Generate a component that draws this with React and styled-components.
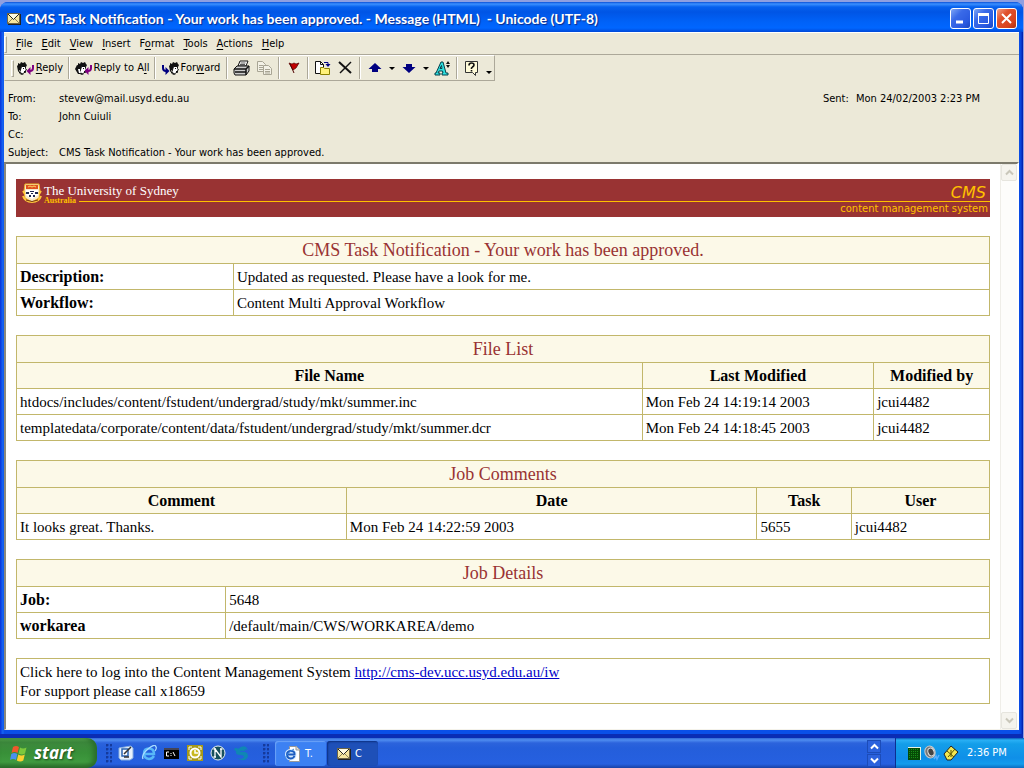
import React from "react";
import styled, { createGlobalStyle, css } from "styled-components";

const UI = '"DejaVu Sans Condensed", "Noto Sans", sans-serif';
const SERIF = '"Liberation Serif", serif';

const GlobalStyle = createGlobalStyle`
  *, *::before, *::after { box-sizing: border-box; }
  body { margin: 0; background: #8f9fe0; font: 11px/18px ${UI}; color: #000; }
  button { font: inherit; color: inherit; padding: 0; border: 0; background: none; }
`;

const Desktop = styled.div`
  min-height: 100vh;
  display: flex;
  flex-direction: column;
`;

const Window = styled.section`
  flex: 1;
  display: flex;
  flex-direction: column;
  margin: 2px 1px 0 0;
  padding: 0 4px 4px;
  border-bottom: 4px solid #0a2cb4;
  border-radius: 8px 8px 0 0;
  background: linear-gradient(90deg, #0831d9 0, #1668f5 3px, #0a4fe8 4px, #0a4fe8 calc(100% - 4px), #0a42d8 calc(100% - 2px), #0019a5 100%);
`;

const TitleBar = styled.header`
  height: 30px;
  display: flex;
  align-items: center;
  gap: 4px;
  margin: 0 -4px;
  padding: 3px 6px 0 7px;
  border-radius: 8px 8px 0 0;
  background: linear-gradient(#0a50d8 0, #3b90ff 2px, #0660ee 5px, #0055e5 10px, #0062f8 20px, #0066ff 26px, #0048d8 30px);
`;

const Title = styled.h1`
  flex: 1;
  margin: 0;
  font: bold 14px/20px Lato, sans-serif;
  white-space: pre;
  color: #fff;
  text-shadow: 1px 1px 1px #0a2a8a;
`;

const CaptionButtons = styled.div`
  display: flex;
  gap: 2px;
`;

const CaptionButton = styled.button`
  width: 21px;
  height: 21px;
  display: grid;
  place-items: center;
  border: 1px solid #fff;
  border-radius: 3px;
  background: ${(p) =>
    p.$close
      ? "linear-gradient(135deg, #f0a088 0, #e0512c 35%, #d8431c 75%, #a83214 100%)"
      : "linear-gradient(135deg, #7fa6f5 0, #3a6ae8 35%, #2a5ae0 75%, #1a46c0 100%)"};
`;

const Client = styled.div`
  flex: 1;
  display: flex;
  flex-direction: column;
  background: #ece9d8;
`;

const MenuBar = styled.nav`
  height: 23px;
  display: flex;
  align-items: center;
  gap: 9px;
  padding-top: 1px;
  border-top: 1px solid #fff;
  border-bottom: 1px solid #aca899;
`;

const Grip = styled.span`
  width: 3px;
  height: 17px;
  border: 1px solid;
  border-color: #fff #aca899 #aca899 #fff;
`;

const MenuItem = styled.button`
  line-height: 16px;
`;

const Key = styled.span`
  text-decoration: underline;
  text-underline-offset: 2px;
`;

const ToolBar = styled.div`
  align-self: flex-start;
  height: 26px;
  display: flex;
  align-items: center;
  padding-left: 6px;
  border: 1px solid;
  border-color: #fff #aca899 #aca899 #ece9d8;
`;

const ToolButton = styled.button`
  height: 22px;
  width: ${(p) => (p.$width ? p.$width + "px" : "auto")};
  display: flex;
  align-items: center;
  justify-content: center;
  gap: 1px;
  line-height: 16px;
`;

const Divider = styled.span`
  width: 2px;
  height: 22px;
  margin: 0 2px;
  border-left: 1px solid #aca899;
  border-right: 1px solid #fff;
`;

const Headers = styled.div`
  display: flex;
  justify-content: space-between;
  padding: 9px 39px 0 4px;
`;

const Fields = styled.dl`
  display: grid;
  grid-template-columns: ${(p) => p.$label}px auto;
  align-content: start;
  margin: 0;
  white-space: pre;
  dd { margin: 0; min-height: 18px; }
`;

const Viewer = styled.div`
  flex: 1;
  display: flex;
  border: 1px solid;
  border-width: 2px 2px 1px 2px;
  border-color: #7c7a6c #fff #f4f2ea #8a887c;
  background: #fff;
`;

const Message = styled.main`
  flex: 1;
  display: flex;
  flex-direction: column;
  gap: 19px;
  padding: 15px 10px 24px 10px;
  font: 15px/19px ${SERIF};
`;

const ScrollBar = styled.div`
  width: 17px;
  display: flex;
  flex-direction: column;
  justify-content: space-between;
  border-left: 1px solid #efeee8;
  background: #fdfdfb;
`;

const ScrollButton = styled.button`
  height: 17px;
  display: grid;
  place-items: center;
  border: 1px solid #e6e5de;
  border-radius: 2px;
  background: #f5f4ee;
`;

const Banner = styled.div`
  height: 38px;
  display: flex;
  gap: 2px;
  padding: 4px 0 0 6px;
  background: #993333;
  color: #fff;
`;

const BannerText = styled.div`
  flex: 1;
  display: flex;
  flex-direction: column;
`;

const BannerTop = styled.div`
  display: flex;
  justify-content: space-between;
  height: 14px;
  padding-right: 4px;
`;

const University = styled.span`
  font: 13px/16px ${SERIF};
`;

const Cms = styled.span`
  font: italic 16px/20px "DejaVu Sans", sans-serif;
  color: #ffc000;
`;

const BannerRule = styled.div`
  display: flex;
  gap: 3px;
  height: 8px;
  font: bold 8px/8px ${SERIF};
  color: #ffc000;
`;

const Rule = styled.span`
  flex: 1;
  height: 5px;
  border-bottom: 1px solid #ffc000;
`;

const BannerSub = styled.span`
  align-self: flex-end;
  padding-right: 2px;
  font: 10px/8px "DejaVu Sans", sans-serif;
  color: #ffc000;
`;

const line = css`1px solid #c2b76b`;

const Table = styled.table`
  width: 100%;
  border-collapse: collapse;
  table-layout: fixed;
  th, td { height: 26px; padding: 0 3px; border: ${line}; }
  th { font-size: 16px; }
  td { padding-top: 2px; }
  td, tbody th { text-align: left; }
`;

const TableTitle = styled.th`
  && { height: 27px; font-weight: normal; font-size: 18px; text-align: center; color: #993333; background: #fcf9e8; }
`;

const Column = styled.th`
  background: #fcf9e8;
`;

const Note = styled.p`
  margin: 0;
  padding: 4px 3px 2px;
  border: ${line};
  a { color: #0000c8; }
`;

const TaskBar = styled.footer`
  height: 30px;
  display: flex;
  background: linear-gradient(#3168d5 0, #4e8cf0 2px, #2c63dc 5px, #245edb 10px, #2660e0 26px, #1941a5 30px);
  color: #fff;
`;

const Start = styled.button`
  width: 97px;
  display: flex;
  align-items: center;
  gap: 6px;
  padding: 0 0 0 10px;
  border-radius: 0 10px 10px 0;
  background: linear-gradient(#5eac56 0, #3c873c 4px, #389038 15px, #3f9a3f 24px, #2a6a2a 30px);
  box-shadow: inset -4px 0 5px #2a6e2a;
  font: italic bold 17px/24px "Open Sans", sans-serif;
  color: #fff;
  text-shadow: 1px 1px 2px #1c4a1c;
`;

const Dots = styled.span`
  width: 6px;
  height: 20px;
  margin: 6px ${(p) => p.$after || 0}px 0 ${(p) => p.$before}px;
  background: radial-gradient(circle at 1px 1px, #153a9c 1px, transparent 2px) 0 0 / 4px 4px;
`;

const QuickLaunch = styled.div`
  display: flex;
  align-items: center;
  gap: 7px;
  padding-left: 6px;
`;

const Task = styled.button`
  width: 51px;
  height: 25px;
  display: flex;
  align-items: center;
  gap: 4px;
  margin: 3px 1px 0 0;
  padding-left: 10px;
  border-radius: 3px;
  background: ${(p) => (p.$active ? "#1e50b8" : "#3c81f3")};
  box-shadow: ${(p) => (p.$active ? "inset 1px 1px 2px #0c2f80" : "inset 1px 1px 1px #6ba2f8")};
  color: #fff;
`;

const Spinner = styled.div`
  display: flex;
  flex-direction: column;
  gap: 1px;
  margin: 2px 14px 0 auto;
`;

const SpinButton = styled.button`
  width: 14px;
  height: 13px;
  display: grid;
  place-items: center;
  border: 1px solid #1c4cb8;
  background: #2c62dd;
`;

const Tray = styled.div`
  width: 129px;
  display: flex;
  align-items: center;
  gap: 3px;
  padding-left: 12px;
  border-left: 1px solid #0c2f90;
  background: linear-gradient(#0c59b9 0, #29b0f5 2px, #139ee9 6px, #0f8fe8 20px, #149cec 26px, #0c6cc0 30px);
  time { margin-left: 5px; }
`;

const Svg = ({ w = 16, h = 16, children }) => (
  <svg width={w} height={h} viewBox={`0 0 ${w} ${h}`} aria-hidden="true">
    {children}
  </svg>
);

const Envelope = () => (
  <Svg w={14} h={12}>
    <rect x="1" y="1" width="13" height="11" fill="#222" />
    <rect x="0.5" y="0.5" width="12" height="10" fill="#f6e7a0" stroke="#6b6448" />
    <path d="M1 1l5.500 5.500L12 1" fill="#fffbe0" stroke="#222" />
    <path d="M1 10l4-4M12 10L8 6" stroke="#8c835a" />
  </Svg>
);

const Head = ({ x = 0 }) => (
  <g transform={`translate(${x} 0)`}>
    <path d="M0 5l1-1V2l2 1 1-2 2 1 2-1 1 2 1 1-1 2H5l-1 4-2-1-1 1z" fill="#111" />
    <path d="M4.500 5.500h4v2l1 1.500-1 .5v2H7l-2 2-2-3z" fill="#fff" stroke="#111" />
    <path d="M6 7.500h1M7 10.500h1" stroke="#111" />
    <path d="M1.500 7v3l2 3h3" fill="none" stroke="#111" />
  </g>
);

const ReplyIcon = () => (
  <Svg w={18} h={15}>
    <Head />
    <path d="M16 4v3q0 3-3 3" fill="none" stroke="#800080" strokeWidth="2" />
    <path d="M9.500 10l4-4v8z" fill="#800080" />
  </Svg>
);

const ReplyAllIcon = () => (
  <Svg w={18} h={15}>
    <Head x={2} />
    <path d="M0 8l2-4 2 1 1 3-1 2 2 3H3z" fill="#111" />
    <path d="M3 8h2v2l1 2H4z" fill="#fff" />
    <path d="M16 4v3q0 3-3 3" fill="none" stroke="#800080" strokeWidth="2" />
    <path d="M9.500 10l4-4v8z" fill="#800080" />
  </Svg>
);

const ForwardIcon = () => (
  <Svg w={18} h={15}>
    <Head x={7} />
    <path d="M1 4v3q0 3 3 3" fill="none" stroke="#000080" strokeWidth="2" />
    <path d="M7.500 10l-4-4v8z" fill="#000080" />
  </Svg>
);

const PrintIcon = () => (
  <Svg w={17}>
    <path d="M5 6l2-5h8l-2 5z" fill="#fff" stroke="#111" />
    <path d="M7.500 3h5M7 4.500h5" stroke="#111" strokeWidth=".7" />
    <path d="M1 9l3-3h12v5l-3 4H2l-1-2z" fill="#ccc" stroke="#111" />
    <path d="M1 9h12l3-3M13 9v6M2 12h11" fill="none" stroke="#111" strokeWidth="1.500" />
  </Svg>
);

const CopyIcon = () => (
  <Svg w={17}>
    <g fill="#f3f1e6" stroke="#a8a594">
      <path d="M1.500 1.500h5l3 3v7h-8z" />
      <path d="M3 5.500h4M3 7.500h4M3 9.500h4" />
      <path d="M7.500 5.500h5l3 3v6h-8z" />
      <path d="M9 9.500h5M9 11.500h5M9 13h5" />
    </g>
  </Svg>
);

const FlagIcon = () => (
  <Svg w={12}>
    <path d="M1 3l3 1 2-1 2 1 3-1-3 5-3 2z" fill="#c00000" stroke="#500000" strokeWidth=".7" />
    <path d="M2 4l4 9" stroke="#500000" />
  </Svg>
);

const MoveIcon = () => (
  <Svg w={17}>
    <path d="M1.500 1.500h5l3 3v9h-8z" fill="#fff" stroke="#111" />
    <path d="M6.500 1.500v3h3" fill="none" stroke="#111" />
    <path d="M6.500 7.500h3l1 1h5v6h-9z" fill="#fff27a" stroke="#8a8000" />
    <path d="M10 2.500h4V5" fill="none" stroke="#000080" />
    <path d="M11.500 4h5L14 7z" fill="#000080" />
  </Svg>
);

const DeleteIcon = () => (
  <Svg w={15}>
    <path d="M1 2l12 11" stroke="#111" strokeWidth="2" />
    <path d="M13 2L2 13" stroke="#111" strokeWidth="1.500" />
  </Svg>
);

const Up = () => (
  <Svg w={14}>
    <path d="M7 3l6.500 6H10v3H4V9H.5z" fill="#000080" />
  </Svg>
);

const Down = () => (
  <Svg w={14}>
    <path d="M7 13l6.500-6H10V4H4v3H.5z" fill="#000080" />
  </Svg>
);

const Caret = ({ low }) => (
  <Svg w={6}>
    <path d={low ? "M0 11h6l-3 3z" : "M0 7h6l-3 3z"} fill="#000" />
  </Svg>
);

const FontIcon = () => (
  <Svg w={17}>
    <path d="M1 15v-2h1L7 2h2l3 11h2v2H8v-2h1l-.5-2H5l-1 2h2v2zM6 8.500h2L7.500 5.500z" fill="#2ee0e0" stroke="#04404a" />
    <path d="M12 4l2-3 2 3zM12 5h4l-2 3z" fill="#111" />
  </Svg>
);

const HelpIcon = () => (
  <Svg w={15}>
    <path d="M1.500 1.500h12v11h-2v3l-3-3h-7z" fill="#fffbd8" stroke="#333" />
    <path d="M5 5.500Q5 3 7.500 3T10 5q0 1-1.500 2L7.500 8v1M7.500 10v1.500" fill="none" stroke="#111" strokeWidth="1.600" />
  </Svg>
);

const Chevron = ({ up, color }) => (
  <Svg w={9} h={7}>
    <path d={up ? "M1 5.500L4.500 2 8 5.500" : "M1 1.500L4.500 5 8 1.500"} fill="none" stroke={color} strokeWidth="2" />
  </Svg>
);

const Crest = () => (
  <Svg w={20} h={21}>
    <path d="M3 1h14l1 7-1 7-7 4-7-4-1-7z" fill="#f7e9c8" stroke="#f0b020" />
    <path d="M4 2h12v4H4z" fill="#e05020" />
    <path d="M6 4l2-1 2 1 2-1 2 1" fill="none" stroke="#ffd860" />
    <path d="M4 7h12v5l-6 4-6-4z" fill="#fff" />
    <path d="M4 9h3v2H4zM8 8h4v1H8zM13 9h3v2h-3zM7 12h2v2H7zM11 12h2v2h-2zM9 10h2v1H9z" fill="#202850" />
    <path d="M1 13q2 6 9 6t9-6M1 8l2 3M19 8l-2 3" fill="none" stroke="#ffc83c" strokeWidth="2" />
    <path d="M4 17q6 3 12 0" fill="none" stroke="#7a3a10" />
  </Svg>
);

const WindowsLogo = () => (
  <Svg w={18} h={17}>
    <path d="M3 2q3-2 6 0L7.500 8q-3-2-6 0z" fill="#f0582c" />
    <path d="M10 2.500q3 2 6.500 0L15 8.500q-3 2-6.500 0z" fill="#7cc83c" />
    <path d="M1.300 9q3-2 6 0L6 15q-3-2-6 0z" fill="#4a90f0" />
    <path d="M8.300 9.500q3 2 6.500 0l-1.500 6q-3 2-6.500 0z" fill="#fcd030" />
  </Svg>
);

const DesktopIcon = () => (
  <Svg>
    <path d="M1 3l12-2 2 2v10l-3 2H3l-2-2z" fill="#e8f2fc" stroke="#8ab0e0" />
    <path d="M4 4h6v7H4z" fill="#fff" stroke="#2a64b0" strokeWidth="1.500" />
    <path d="M6 9l7-7M6 12h5" stroke="#333" strokeWidth="1.500" />
  </Svg>
);

const ExplorerIcon = () => (
  <Svg>
    <path d="M13 11q-2 3-5 3-5-.5-5-5.500T8 3.500q5 0 5 5.500H4" fill="none" stroke="#58b8f8" strokeWidth="2.500" />
    <path d="M2 14Q0 10 7 4t8-2q1 1-1 4" fill="none" stroke="#a8dcff" strokeWidth="1.300" />
  </Svg>
);

const ConsoleIcon = () => (
  <Svg>
    <rect y="3" width="15" height="11" fill="#000" />
    <rect y="3" width="15" height="2" fill="#445" />
    <path d="M5 7H2.500v4H5M7 8v1M7 10v1M9 7l2 4" fill="none" stroke="#fff" />
  </Svg>
);

const OutlookIcon = () => (
  <Svg>
    <rect width="16" height="16" fill="#a89a18" />
    <path d="M2 5V2h3M11 2h3v3M14 11v3h-3M5 14H2v-3" fill="none" stroke="#fff" />
    <circle cx="8" cy="8" r="4.500" fill="#c8b820" stroke="#fff" strokeWidth="2" />
    <path d="M8 5v3h3" fill="none" stroke="#fff" strokeWidth="1.500" />
  </Svg>
);

const NetscapeIcon = () => (
  <Svg>
    <circle cx="8" cy="8" r="7" fill="#17505c" stroke="#e8f0f0" />
    <path d="M5 12V4l6 8V4M3.500 4H6M10 4h2.500M3.500 12H6" fill="none" stroke="#fff" strokeWidth="1.300" />
  </Svg>
);

const SwirlIcon = () => (
  <Svg>
    <path d="M1 5q1-4 4-1 4-4 8-2l2 3-3-1q1 2-1 2Q7 5 7 7q8-1 8 4-1 5-7 4l-5-2q7 2 8-1 0-2-4-2-5 0-4-4z" fill="#0f86b4" />
  </Svg>
);

const PageIcon = () => (
  <Svg>
    <path d="M4.500.5h7l3 3v12h-10z" fill="#fff" stroke="#999" />
    <path d="M11 .5v3.500h3.500" fill="#ddd" stroke="#999" />
    <path d="M9.500 10q-1 2.500-4 2.500Q2 12 2 8.500T6 5q4 0 3.500 3.500H3" fill="none" stroke="#d8ecff" strokeWidth="4" />
    <path d="M9.500 10q-1 2.500-4 2.500Q2 12 2 8.500T6 5q4 0 3.500 3.500H3" fill="none" stroke="#1c5cc0" strokeWidth="2" />
    <path d="M1 13Q-1 9 9 3" fill="none" stroke="#3c88e0" />
  </Svg>
);

const NetIcon = () => (
  <Svg w={13} h={13}>
    <rect width="13" height="13" fill="#e8f4e0" />
    <rect width="12" height="12" y="1" fill="#064a06" />
    <path d="M1 2.500h10M1 4.500h10M1 6.500h10M1 8.500h10M1 10.500h10" stroke="#189018" strokeDasharray="1 1" />
  </Svg>
);

const SpeakerIcon = () => (
  <Svg>
    <ellipse cx="6" cy="7" rx="5" ry="6" fill="#777" stroke="#ccc" transform="rotate(-20 6 7)" />
    <ellipse cx="7" cy="7" rx="3" ry="4" fill="#444" stroke="#ddd" transform="rotate(-20 7 7)" />
    <path d="M10 14l2-3 1 3 2-4" fill="none" stroke="#58b0ff" strokeWidth="1.500" />
  </Svg>
);

const TagIcon = () => (
  <Svg>
    <path d="M1 9l7-8 7 6-7 8H4z" fill="#f4e850" stroke="#222" />
    <path d="M4 6l7 6M5 12l7-8M8 5v7" stroke="#5a5400" />
  </Svg>
);

const menus = [["", "F", "ile"], ["", "E", "dit"], ["", "V", "iew"], ["", "I", "nsert"], ["F", "o", "rmat"], ["", "T", "ools"], ["", "A", "ctions"], ["", "H", "elp"]];

const files = [
  ["htdocs/includes/content/fstudent/undergrad/study/mkt/summer.inc", "Mon Feb 24 14:19:14 2003", "jcui4482"],
  ["templatedata/corporate/content/data/fstudent/undergrad/study/mkt/summer.dcr", "Mon Feb 24 14:18:45 2003", "jcui4482"],
];

const comments = [["It looks great. Thanks.", "Mon Feb 24 14:22:59 2003", "5655", "jcui4482"]];

function PairTable({ title, share, rows }) {
  return (
    <Table>
      <colgroup>
        <col style={{ width: share }} />
        <col />
      </colgroup>
      <thead>
        <tr><TableTitle colSpan={2}>{title}</TableTitle></tr>
      </thead>
      <tbody>
        {rows.map(([label, value]) => (
          <tr key={label}><th scope="row">{label}</th><td>{value}</td></tr>
        ))}
      </tbody>
    </Table>
  );
}

function ListTable({ title, columns, shares, rows }) {
  return (
    <Table>
      <colgroup>
        {shares.map((share, i) => <col key={i} style={{ width: share }} />)}
      </colgroup>
      <thead>
        <tr><TableTitle colSpan={columns.length}>{title}</TableTitle></tr>
        <tr>{columns.map((c) => <Column key={c} scope="col">{c}</Column>)}</tr>
      </thead>
      <tbody>
        {rows.map((row) => (
          <tr key={row[0]}>{row.map((cell) => <td key={cell}>{cell}</td>)}</tr>
        ))}
      </tbody>
    </Table>
  );
}

export default function App() {
  return (
    <Desktop>
      <GlobalStyle />
      <Window>
        <TitleBar>
          <Envelope />
          <Title>{"CMS Task Notification - Your work has been approved. - Message (HTML)  - Unicode (UTF-8)"}</Title>
          <CaptionButtons>
            <CaptionButton aria-label="Minimize"><Svg w={13} h={13}><path d="M2 10h7" stroke="#fff" strokeWidth="3" /></Svg></CaptionButton>
            <CaptionButton aria-label="Maximize"><Svg w={13} h={13}><path d="M1.500 2v9.500h10V2" fill="none" stroke="#fff" /><path d="M1 2.500h11" stroke="#fff" strokeWidth="3" /></Svg></CaptionButton>
            <CaptionButton $close aria-label="Close"><Svg w={13} h={13}><path d="M2 2l9 9M11 2l-9 9" stroke="#fff" strokeWidth="2" /></Svg></CaptionButton>
          </CaptionButtons>
        </TitleBar>
        <Client>
          <MenuBar>
            <Grip />
            {menus.map(([pre, key, rest]) => (
              <MenuItem key={pre + key + rest}>{pre}<Key>{key}</Key>{rest}</MenuItem>
            ))}
          </MenuBar>
          <ToolBar>
            <Grip />
            <ToolButton $width={52}><ReplyIcon /><span><Key>R</Key>eply</span></ToolButton>
            <Divider />
            <ToolButton $width={80}><ReplyAllIcon /><span>Reply to A<Key>l</Key>l</span></ToolButton>
            <Divider />
            <ToolButton $width={66}><ForwardIcon /><span>For<Key>w</Key>ard</span></ToolButton>
            <Divider />
            <ToolButton $width={23} aria-label="Print"><PrintIcon /></ToolButton>
            <ToolButton $width={23} aria-label="Copy"><CopyIcon /></ToolButton>
            <Divider />
            <ToolButton $width={23} aria-label="Flag"><FlagIcon /></ToolButton>
            <Divider />
            <ToolButton $width={23} aria-label="Move to folder"><MoveIcon /></ToolButton>
            <ToolButton $width={23} aria-label="Delete"><DeleteIcon /></ToolButton>
            <Divider />
            <ToolButton $width={23} aria-label="Previous item"><Up /></ToolButton>
            <ToolButton $width={11} aria-label="Previous options"><Caret /></ToolButton>
            <ToolButton $width={23} aria-label="Next item"><Down /></ToolButton>
            <ToolButton $width={11} aria-label="Next options"><Caret /></ToolButton>
            <ToolButton $width={23} aria-label="Font size"><FontIcon /></ToolButton>
            <Divider />
            <ToolButton $width={23} aria-label="Help"><HelpIcon /></ToolButton>
            <ToolButton $width={11} aria-label="Toolbar options"><Caret low /></ToolButton>
          </ToolBar>
          <Headers>
            <Fields $label={51}>
              <dt>From:</dt><dd>stevew@mail.usyd.edu.au</dd>
              <dt>To:</dt><dd>John Cuiuli</dd>
              <dt>Cc:</dt><dd />
              <dt>Subject:</dt><dd>CMS Task Notification - Your work has been approved.</dd>
            </Fields>
            <Fields $label={33}><dt>Sent:</dt><dd>Mon 24/02/2003 2:23 PM</dd></Fields>
          </Headers>
          <Viewer>
            <Message>
              <Banner>
                <Crest />
                <BannerText>
                  <BannerTop><University>The University of Sydney</University><Cms>CMS</Cms></BannerTop>
                  <BannerRule>Australia<Rule /></BannerRule>
                  <BannerSub>content management system</BannerSub>
                </BannerText>
              </Banner>
              <PairTable
                title="CMS Task Notification - Your work has been approved."
                share="22.3%"
                rows={[["Description:", "Updated as requested. Please have a look for me."], ["Workflow:", "Content Multi Approval Workflow"]]}
              />
              <ListTable title="File List" columns={["File Name", "Last Modified", "Modified by"]} shares={["64.3%", "23.8%", "11.9%"]} rows={files} />
              <ListTable title="Job Comments" columns={["Comment", "Date", "Task", "User"]} shares={["33.9%", "42.2%", "9.7%", "14.2%"]} rows={comments} />
              <PairTable title="Job Details" share="21.5%" rows={[["Job:", "5648"], ["workarea", "/default/main/CWS/WORKAREA/demo"]]} />
              <Note>
                Click here to log into the Content Management System <a href="http://cms-dev.ucc.usyd.edu.au/iw">http://cms-dev.ucc.usyd.edu.au/iw</a>
                <br />
                For support please call x18659
              </Note>
            </Message>
            <ScrollBar>
              <ScrollButton aria-label="Scroll up"><Chevron up color="#c9c7ba" /></ScrollButton>
              <ScrollButton aria-label="Scroll down"><Chevron color="#c9c7ba" /></ScrollButton>
            </ScrollBar>
          </Viewer>
        </Client>
      </Window>
      <TaskBar>
        <Start><WindowsLogo />start</Start>
        <Dots $before={9} />
        <QuickLaunch>
          <DesktopIcon /><ExplorerIcon /><ConsoleIcon /><OutlookIcon /><NetscapeIcon /><SwirlIcon />
        </QuickLaunch>
        <Dots $before={14} $after={6} />
        <Task><PageIcon />T.</Task>
        <Task $active><Envelope />C</Task>
        <Spinner>
          <SpinButton aria-label="Previous tasks"><Chevron up color="#fff" /></SpinButton>
          <SpinButton aria-label="Next tasks"><Chevron color="#fff" /></SpinButton>
        </Spinner>
        <Tray><NetIcon /><SpeakerIcon /><TagIcon /><time>2:36 PM</time></Tray>
      </TaskBar>
    </Desktop>
  );
}
